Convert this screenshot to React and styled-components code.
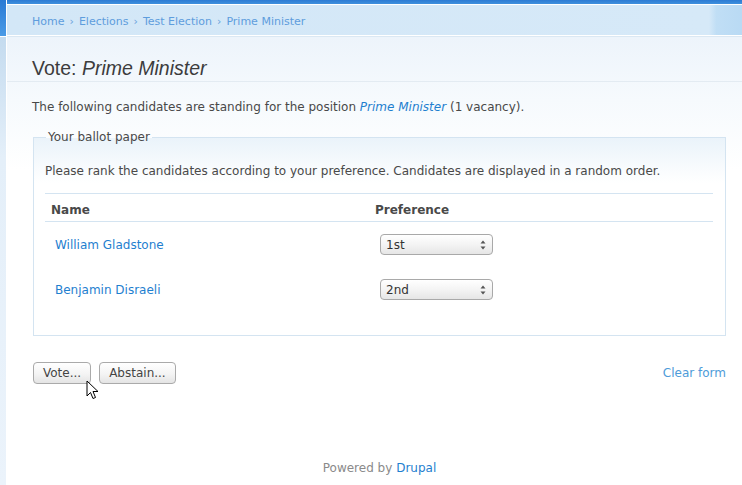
import React from "react";
import styled, { createGlobalStyle } from "styled-components";

const Global = createGlobalStyle`
  html, body { margin: 0; padding: 0; background: #ffffff; }
  body { font-family: "DejaVu Sans", Verdana, sans-serif; font-size: 12px; color: #494949; }
  #root { min-height: 485px; }
`;

const Page = styled.div`
  display: flex;
  min-height: 485px;
  position: relative;
  overflow: hidden;
`;

const LeftStrip = styled.div`
  width: 6px;
  flex: none;
  display: flex;
  flex-direction: column;
  border-right: 1px solid #ffffff;
`;

const StripTop = styled.div`
  height: 36px;
  background: linear-gradient(180deg, #2a7ad4 0%, #4b9be6 100%);
  border-bottom: 1px solid #ffffff;
`;

const StripBottom = styled.div`
  flex: 1;
  background: linear-gradient(180deg, #c4dbef 0%, #e4eff9 120px, #ebf3fb 100%);
`;

const Main = styled.div`
  flex: 1;
  display: flex;
  flex-direction: column;
  background: linear-gradient(180deg, #edf4fb 37px, #f6fafd 100px, #ffffff 170px);
`;

const TopBar = styled.div`
  height: 4px;
  background: linear-gradient(180deg, #2c7bd4, #3f90dd);
  border-bottom: 1px solid #ffffff;
`;

const Breadcrumb = styled.nav`
  height: 31px;
  display: flex;
  align-items: center;
  padding: 3px 0 0 25px;
  box-sizing: border-box;
  font-size: 11px;
  color: #6aa3dc;
  background: linear-gradient(90deg, #d3e7f7 0%, #d6e9f8 95.5%, #c0def5 96.5%, #b9daf4 100%);
  border-bottom: 1px solid #ffffff;
  box-shadow: 0 1px 0 #dbe8f3;
`;

const Crumb = styled.a`
  color: #5e9ddd;
  text-decoration: none;
`;

const Sep = styled.span`
  margin: 0 5px;
  color: #6aa3dc;
`;

const TitleBar = styled.div`
  height: 46px;
  box-sizing: border-box;
  display: flex;
  align-items: flex-end;
  padding: 0 0 1px 25px;
  border-bottom: 1px solid #e3ebf2;
`;

const Title = styled.h1`
  margin: 0;
  font-family: "Liberation Sans", Arial, sans-serif;
  font-weight: normal;
  font-size: 19.5px;
  line-height: 24px;
  color: #3c3c3c;
  em { font-style: italic; }
`;

const Content = styled.div`
  padding: 15px 16px 0 25px;
  display: flex;
  flex-direction: column;
`;

const Intro = styled.p`
  margin: 0 0 13px 0;
  line-height: 20px;
`;

const Link = styled.a`
  color: #1f80cf;
  text-decoration: none;
  font-style: ${(p) => (p.$italic ? "italic" : "normal")};
`;

const Fieldset = styled.fieldset`
  margin: 0 0 0 1px;
  padding: 6px 12px 23px 11px;
  border: 1px solid #d4e4f1;
  background: linear-gradient(180deg, #eaf3fa 0%, #ffffff 45px);
  min-width: 0;
`;

const Legend = styled.legend`
  padding: 0 2px;
  margin-left: 1px;
  line-height: 14px;
  color: #494949;
`;

const Help = styled.p`
  margin: 11px 0 12px 0;
  line-height: 20px;
`;

const Table = styled.table`
  width: 100%;
  border-collapse: collapse;
  border-top: 1px solid #d4e4f1;
`;

const Th = styled.th`
  text-align: left;
  font-weight: bold;
  padding: 4px 6px 0 6px;
  height: 28px;
  box-sizing: border-box;
  border-bottom: 1px solid #d4e4f1;
  width: ${(p) => p.$w || "auto"};
  color: #494949;
`;

const Td = styled.td`
  height: 45px;
  padding: 0 10px;
  vertical-align: middle;
`;

const SelectBox = styled.div`
  width: 113px;
  height: 21px;
  box-sizing: border-box;
  border: 1px solid #a9a9a9;
  border-radius: 4px;
  background: linear-gradient(180deg, #ffffff 0%, #f4f4f4 50%, #e6e6e6 100%);
  display: flex;
  align-items: center;
  justify-content: space-between;
  padding: 0 0 0 5px;
  margin-left: 1px;
  font-size: 12px;
  color: #333;
`;

const Arrows = styled.svg`
  width: 10px;
  height: 14px;
  margin-right: 4px;
`;

const Actions = styled.div`
  margin-top: 26px;
  display: flex;
  align-items: center;
  gap: 8px;
  position: relative;
`;

const Button = styled.button`
  height: 22px;
  padding: 0 ${(p) => p.$pad || 9}px;
  border: 1px solid #aaaaaa;
  border-radius: 4px;
  background: linear-gradient(180deg, #ffffff 0%, #f4f4f4 55%, #e4e4e4 100%);
  font-family: "DejaVu Sans", Verdana, sans-serif;
  font-size: 12px;
  color: #444;
  line-height: 18px;
  margin-left: ${(p) => (p.$first ? "1px" : "0")};
`;

const ClearLink = styled.a`
  margin-left: auto;
  color: #4e9bd9;
  text-decoration: none;
`;

const Footer = styled.footer`
  margin-top: auto;
  padding: 0 0 9px 10px;
  text-align: center;
  color: #8a8a8a;
  line-height: 16px;
`;

const Cursor = styled.svg`
  position: absolute;
  left: 54px;
  top: 18px;
  width: 13px;
  height: 21px;
`;

function Select({ value }) {
  return (
    <SelectBox>
      <span>{value}</span>
      <Arrows viewBox="0 0 10 14">
        <path d="M5 2.5 L7.5 5.5 L2.5 5.5 Z" fill="#555" />
        <path d="M5 11.5 L7.5 8.5 L2.5 8.5 Z" fill="#555" />
      </Arrows>
    </SelectBox>
  );
}

export default function App() {
  return (
    <>
      <Global />
      <Page>
        <LeftStrip>
          <StripTop />
          <StripBottom />
        </LeftStrip>
        <Main>
          <TopBar />
          <Breadcrumb>
            <Crumb href="#">Home</Crumb>
            <Sep>›</Sep>
            <Crumb href="#">Elections</Crumb>
            <Sep>›</Sep>
            <Crumb href="#">Test Election</Crumb>
            <Sep>›</Sep>
            <Crumb href="#">Prime Minister</Crumb>
          </Breadcrumb>
          <TitleBar>
            <Title>
              Vote: <em>Prime Minister</em>
            </Title>
          </TitleBar>
          <Content>
            <Intro>
              The following candidates are standing for the position{" "}
              <Link href="#" $italic>Prime Minister</Link> (1 vacancy).
            </Intro>
            <Fieldset>
              <Legend>Your ballot paper</Legend>
              <Help>
                Please rank the candidates according to your preference. Candidates are displayed in a random order.
              </Help>
              <Table>
                <thead>
                  <tr>
                    <Th $w="324px">Name</Th>
                    <Th>Preference</Th>
                  </tr>
                </thead>
                <tbody>
                  <tr>
                    <Td><Link href="#">William Gladstone</Link></Td>
                    <Td><Select value="1st" /></Td>
                  </tr>
                  <tr>
                    <Td><Link href="#">Benjamin Disraeli</Link></Td>
                    <Td><Select value="2nd" /></Td>
                  </tr>
                </tbody>
              </Table>
            </Fieldset>
            <Actions>
              <Button $first>Vote...</Button>
              <Button>Abstain...</Button>
              <ClearLink href="#">Clear form</ClearLink>
              <Cursor viewBox="0 0 13 21">
                <path d="M1 1 L1 16 L4.5 12.5 L7 18.5 L9.5 17.5 L7 11.5 L12 11.5 Z" fill="#ffffff" stroke="#000" strokeWidth="1" strokeLinejoin="miter" />
              </Cursor>
            </Actions>
          </Content>
          <Footer>
            Powered by <Link href="#">Drupal</Link>
          </Footer>
        </Main>
      </Page>
    </>
  );
}
